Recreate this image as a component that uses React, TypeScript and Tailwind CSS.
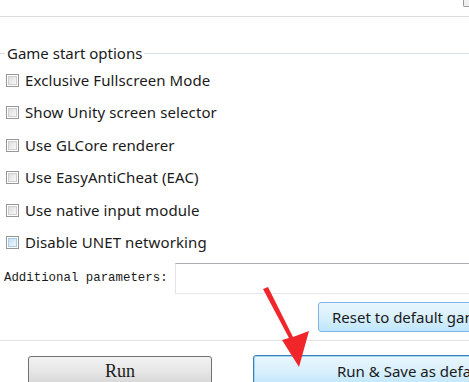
import React from "react";

const rows = [
  "Exclusive Fullscreen Mode",
  "Show Unity screen selector",
  "Use GLCore renderer",
  "Use EasyAntiCheat (EAC)",
  "Use native input module",
  "Disable UNET networking",
];

function Check({ hover }: { hover?: boolean }) {
  return (
    <div className="w-[13px] h-[13px] border border-[#979797] bg-white p-px shrink-0">
      <div
        className={
          hover
            ? "w-full h-full bg-gradient-to-br from-[#c4e1f6] to-[#eef7fd] border border-[#a9cde8]"
            : "w-full h-full bg-gradient-to-br from-[#dedede] to-[#f8f8f8] border border-[#cfcfcf]"
        }
      />
    </div>
  );
}

export default function App() {
  return (
    <div
      className="relative w-[469px] h-[382px] overflow-hidden bg-white text-[#1a1a1a]"
      style={{ fontFamily: '"Noto Sans", "Open Sans", sans-serif' }}
    >
      <div className="h-[16px] flex justify-end items-start">
        <div className="w-[6px] h-[7px] border-l border-b border-[#9a9a9a] rounded-bl-[2px] bg-[#f0f0f0]" />
      </div>
      <div className="h-px bg-[#dcdcdc]" />

      <div className="mt-[27px] flex items-center h-[18px]">
        <div className="w-[5px] h-px bg-[#d5dfe5]" />
        <span className="px-[2px] text-[15px] leading-[18px]">Game start options</span>
        <div className="flex-1 h-px bg-[#d5dfe5]" />
      </div>

      <div className="mt-[9px] flex flex-col pl-[6px] gap-[13.4px]">
        {rows.map((r, i) => (
          <div key={r} className="flex items-center gap-[6px] h-[19px]">
            <Check hover={i === 5} />
            <span className="text-[15px] leading-[19px] tracking-[0.1px]">{r}</span>
          </div>
        ))}
      </div>

      <div className="mt-[11px] flex items-center h-[31px]">
        <span
          className="pl-[4px] w-[175px] text-[12.4px] shrink-0"
          style={{ fontFamily: '"Liberation Mono", monospace' }}
        >
          Additional parameters:
        </span>
        <div className="flex-1 h-[31px] border border-[#abadb3] border-l-[#e2e3ea] border-b-[#e3e9ef] bg-white -mr-[10px]" />
      </div>

      <div className="mt-[8px] flex justify-end h-[30px]">
        <div className="w-[160px] shrink-0 -mr-[9px] h-[30px] rounded-[3px] border border-[#7eb4ea] bg-gradient-to-b from-[#eaf6fd] via-[#d9f0fc] to-[#bee6fd] flex items-center pl-[13px] text-[15px] whitespace-nowrap overflow-hidden">
          Reset to default game
        </div>
      </div>

      <div className="mt-[8px] h-px bg-[#e3e3e3]" />

      <div className="mt-[15px] flex items-start">
        <div
          className="ml-[28px] w-[184px] shrink-0 h-[32px] rounded-[3px] border border-[#707070] bg-gradient-to-b from-[#f2f2f2] via-[#e6e6e6] to-[#d3d3d3] flex items-center justify-center text-[18px]"
          style={{ fontFamily: '"Liberation Serif", serif' }}
        >
          Run
        </div>
        <div className="ml-[41px] w-[230px] shrink-0 h-[32px] -mt-px rounded-[3px] border border-[#3c7fb1] bg-gradient-to-b from-[#eaf6fd] via-[#d9f0fc] to-[#bee6fd] flex items-center pl-[83px] text-[15px] whitespace-nowrap overflow-hidden shadow-[inset_0_0_0_1px_#9fd7f7]">
          Run &amp; Save as default
        </div>
      </div>

      <svg className="absolute left-0 top-0 pointer-events-none" width="469" height="382">
        <polygon
          points="263,289 268,287 293,337 309,331 299,367 282,340 289,338"
          fill="#f0262a"
        />
      </svg>
    </div>
  );
}
